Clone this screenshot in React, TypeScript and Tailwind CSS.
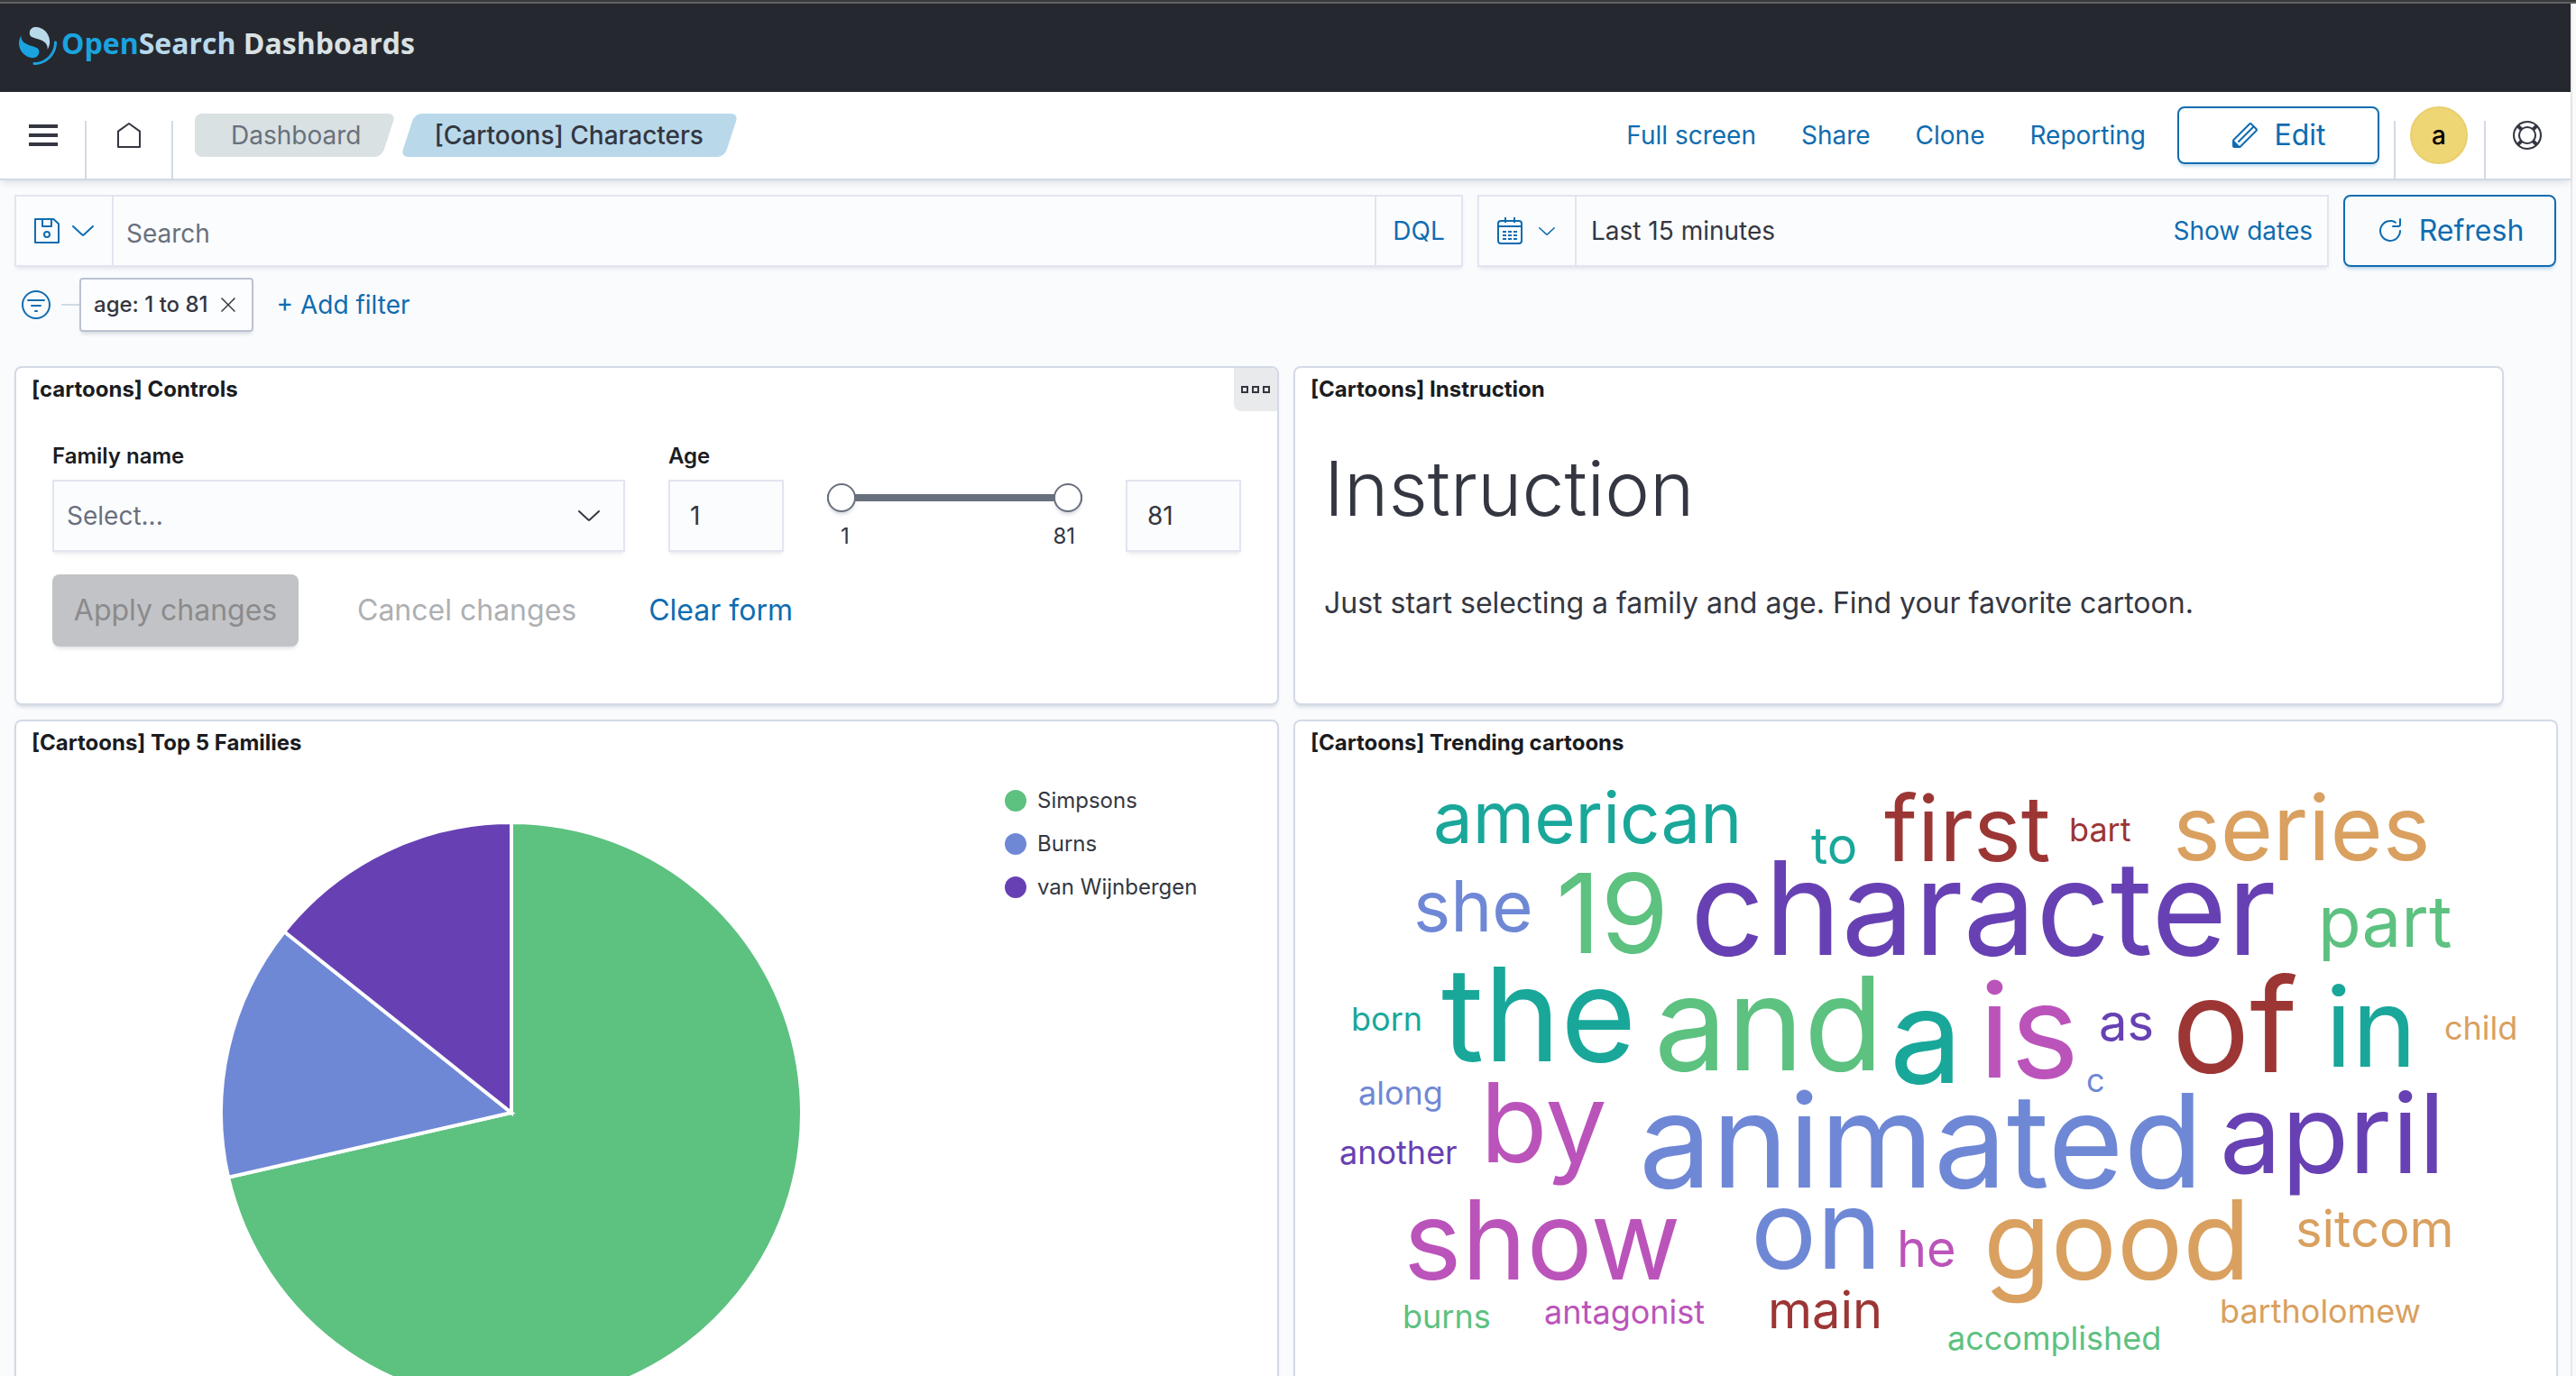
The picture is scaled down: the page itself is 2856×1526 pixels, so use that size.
import React, { useState } from "react";

type IconProps = { className?: string };

const Logo = () => (
  <svg viewBox="0 0 64 64" className="size-[42px]" aria-hidden="true">
    <path
      fill="#1aa3df"
      d="M61.7374 23.5C60.4878 23.5 59.4748 24.513 59.4748 25.7626C59.4748 44.3813 44.3813 59.4748 25.7626 59.4748C24.513 59.4748 23.5 60.4878 23.5 61.7374C23.5 62.987 24.513 64 25.7626 64C46.8805 64 64 46.8805 64 25.7626C64 24.513 62.987 23.5 61.7374 23.5Z"
    />
    <path
      fill="#b9d9eb"
      d="M48.0814 38C50.2572 34.4505 52.3615 29.7178 51.9475 23.0921C51.0899 9.36725 38.6589 -1.04463 26.9206 0.0837327C22.3253 0.525465 17.6068 4.2712 18.026 10.9805C18.2082 13.8961 19.6352 15.6169 21.9544 16.9399C24.1618 18.1992 26.9978 18.9969 30.2128 19.9011C34.0962 20.9934 38.6009 22.2203 42.063 24.7717C46.2125 27.8295 49.0491 31.3743 48.0814 38Z"
    />
    <path
      fill="#1aa3df"
      d="M3.91861 14C1.74276 17.5495 -0.361506 22.2822 0.0524931 28.9079C0.910072 42.6327 13.3411 53.0446 25.0794 51.9163C29.6747 51.4745 34.3932 47.7288 33.974 41.0195C33.7918 38.1039 32.3647 36.3831 30.0456 35.0601C27.8382 33.8008 25.0022 33.0031 21.7872 32.0989C17.9038 31.0066 13.3991 29.7797 9.93694 27.2283C5.78746 24.1705 2.95092 20.6257 3.91861 14Z"
    />
  </svg>
);

const Glyph = ({ className = "", children }: IconProps & { children: React.ReactNode }) => (
  <svg viewBox="0 0 16 16" className={`size-8 shrink-0 ${className}`} fill="none" aria-hidden="true">
    {children}
  </svg>
);

const MenuIcon = () => (
  <Glyph>
    <path fill="currentColor" d="M0 2h16v2H0zM0 7h16v2H0zM0 12h16v2H0z" />
  </Glyph>
);

const HomeIcon = () => (
  <Glyph>
    <path stroke="currentColor" strokeLinejoin="round" d="M2 5.8 8 1.5l6 4.3v8.7H2z" />
  </Glyph>
);

const SaveIcon = () => (
  <Glyph>
    <path stroke="currentColor" strokeLinejoin="round" d="M1.5 1.5h10.2l2.8 2.6v10.4h-13z" />
    <path stroke="currentColor" strokeLinejoin="round" d="M5.5 1.5v4h5v-4" />
    <circle cx="8" cy="10" r="1.5" stroke="currentColor" />
  </Glyph>
);

const CalendarIcon = () => (
  <Glyph>
    <rect x="1.5" y="2.5" width="13" height="12.5" rx="1.5" stroke="currentColor" />
    <path stroke="currentColor" d="M1.5 5.5h13M5.5.5v3M10.5.5v3" />
    <path stroke="currentColor" strokeDasharray="2 1" d="M4 8.5h8M4 10.5h8M4 12.5h8" />
  </Glyph>
);

const FilterIcon = () => (
  <Glyph>
    <circle cx="8" cy="8" r="7.5" stroke="currentColor" />
    <path stroke="currentColor" strokeLinecap="round" d="M3.5 5.5h9M5.5 8.5h5M7.5 11.5h1" />
  </Glyph>
);

const PencilIcon = () => (
  <Glyph>
    <path
      fill="currentColor"
      d="M12.148 3.148L11 2l-9 9v3h3l9-9-1.144-1.144-8.002 7.998a.502.502 0 01-.708 0 .502.502 0 010-.708l8.002-7.998zM11 1c.256 0 .512.098.707.293l3 3a.999.999 0 010 1.414l-9 9A.997.997 0 015 15H2a1 1 0 01-1-1v-3c0-.265.105-.52.293-.707l9-9A.997.997 0 0111 1zM5 14H2v-3l3 3z"
    />
  </Glyph>
);

const HelpIcon = () => (
  <Glyph>
    <path
      fill="currentColor"
      d="M13.6 12.186l-1.357-1.358c-.025-.025-.058-.034-.084-.056.53-.794.84-1.746.84-2.773a4.977 4.977 0 00-.84-2.772c.026-.02.059-.03.084-.056L13.6 3.813a6.96 6.96 0 010 8.373zM8 15a6.956 6.956 0 01-4.186-1.4l1.358-1.358c.025-.025.035-.057.055-.084C6.02 12.688 6.974 13 8 13a4.978 4.978 0 002.773-.84c.02.026.03.058.056.083l1.357 1.358A6.956 6.956 0 018 15zm-5.601-2.813a6.963 6.963 0 010-8.373l1.359 1.358c.024.025.057.035.084.055A4.97 4.97 0 003 8c0 1.027.31 1.98.842 2.773-.027.022-.06.031-.084.056l-1.36 1.358zm5.6-.187A4 4 0 118 4a4 4 0 010 8zM8 1c1.573 0 3.019.525 4.187 1.4l-1.357 1.358c-.025.025-.035.057-.056.084A4.979 4.979 0 008 3a4.979 4.979 0 00-2.773.842c-.021-.027-.03-.059-.055-.084L3.814 2.4A6.957 6.957 0 018 1zm0-1a8.001 8.001 0 10.003 16.002A8.001 8.001 0 008 0z"
    />
  </Glyph>
);

const RefreshIcon = () => (
  <Glyph>
    <path
      fill="currentColor"
      d="M11.228 2.942a.5.5 0 11-.538.842A5 5 0 1013 8a.5.5 0 111 0 6 6 0 11-2.772-5.058zM14 1.5v3A1.5 1.5 0 0112.5 6h-3a.5.5 0 010-1h3a.5.5 0 00.5-.5v-3a.5.5 0 111 0z"
    />
  </Glyph>
);

const Chevron = ({ className = "" }: IconProps) => (
  <svg viewBox="0 0 24 12" className={`shrink-0 ${className}`} fill="none" aria-hidden="true">
    <path stroke="currentColor" strokeWidth="2" strokeLinecap="round" d="m1 1 10.2 9.4q.8.6 1.6 0L23 1" />
  </svg>
);

const MoreIcon = () => (
  <Glyph>
    <path stroke="currentColor" d="M.5 6.5h3v3h-3zM6.5 6.5h3v3h-3zM12.5 6.5h3v3h-3z" />
  </Glyph>
);

const NavDivider = () => <div className="h-16 w-0.5 self-end bg-[#d3dae6]" />;

const fieldClass =
  "h-20 border-2 border-[#e2e5ef] bg-[#fbfcfe] shadow-[0_4px_4px_-2px_rgba(152,162,179,0.25)]";

const thumbClass =
  "pointer-events-none absolute inset-x-0 top-0 h-8 w-full appearance-none bg-transparent outline-none [&::-webkit-slider-thumb]:pointer-events-auto [&::-webkit-slider-thumb]:size-8 [&::-webkit-slider-thumb]:appearance-none [&::-webkit-slider-thumb]:rounded-full [&::-webkit-slider-thumb]:border-2 [&::-webkit-slider-thumb]:border-[#69707d] [&::-webkit-slider-thumb]:bg-white [&::-webkit-slider-thumb]:shadow-[0_4px_4px_-2px_rgba(152,162,179,0.5)]";

const numberClass =
  "w-32 shrink-0 pl-[22px] text-[28px] text-[#343741] outline-none [appearance:textfield] [&::-webkit-inner-spin-button]:appearance-none " +
  fieldClass;

function Panel({
  title,
  className = "",
  actions = false,
  children,
}: {
  title: string;
  className?: string;
  actions?: boolean;
  children: React.ReactNode;
}) {
  return (
    <section
      className={`flex flex-col overflow-hidden rounded-lg border-2 border-[#d3dae6] bg-white shadow-[0_4px_4px_-2px_rgba(152,162,179,0.4)] ${className}`}
    >
      <header className="flex h-12 shrink-0 items-center justify-between pl-[17px]">
        <h2 className="text-2xl font-bold text-[#1a1c21]">{title}</h2>
        {actions && (
          <button
            type="button"
            aria-label="Panel options"
            className="flex size-12 items-center justify-center rounded-bl-lg bg-[#e9eaec] text-[#343741]"
          >
            <MoreIcon />
          </button>
        )}
      </header>
      {children}
    </section>
  );
}

const families = [
  { name: "Simpsons", value: 5, color: "#5dc180", dot: "bg-[#5dc180]" },
  { name: "Burns", value: 1, color: "#6f88d6", dot: "bg-[#6f88d6]" },
  { name: "van Wijnbergen", value: 1, color: "#6741b3", dot: "bg-[#6741b3]" },
];

function Pie() {
  const total = families.reduce((sum, f) => sum + f.value, 0);
  const c = 322;
  const point = (share: number) => {
    const a = share * 2 * Math.PI;
    return `${c + c * Math.sin(a)} ${c - c * Math.cos(a)}`;
  };
  let start = 0;
  return (
    <svg viewBox="0 0 644 644" className="size-[644px] shrink-0" role="img" aria-label="Top 5 families">
      {families.map((f) => {
        const from = start / total;
        start += f.value;
        const to = start / total;
        return (
          <path
            key={f.name}
            d={`M${c} ${c}L${point(from)}A${c} ${c} 0 ${to - from > 0.5 ? 1 : 0} 1 ${point(to)}Z`}
            fill={f.color}
            stroke="#fff"
            strokeWidth="4"
          />
        );
      })}
    </svg>
  );
}

const teal = "#19a79a";
const green = "#5dc180";
const blue = "#6f88d6";
const purple = "#6741b3";
const pink = "#bb54ba";
const red = "#9c3635";
const orange = "#d9a05f";

const words: [string, number, number, number, string][] = [
  ["american", 153, 87, 78, teal],
  ["to", 572, 110, 56, teal],
  ["first", 653, 107, 100, red],
  ["bart", 858, 85, 36, red],
  ["series", 973, 106, 100, orange],
  ["she", 131, 185, 78, blue],
  ["19", 289, 209, 122, green],
  ["character", 438, 211, 144, purple],
  ["part", 1134, 202, 78, green],
  ["born", 62, 295, 36, teal],
  ["the", 162, 329, 144, teal],
  ["and", 398, 339, 144, green],
  ["a", 659, 353, 144, teal],
  ["is", 758, 347, 144, pink],
  ["as", 891, 306, 56, purple],
  ["of", 972, 341, 144, red],
  ["in", 1142, 335, 122, teal],
  ["child", 1274, 305, 36, orange],
  ["c", 877, 363, 36, blue],
  ["along", 70, 377, 36, blue],
  ["by", 205, 441, 122, pink],
  ["animated", 381, 469, 144, blue],
  ["april", 1025, 453, 122, purple],
  ["another", 49, 443, 36, purple],
  ["show", 120, 571, 122, pink],
  ["on", 505, 559, 122, blue],
  ["he", 667, 557, 56, pink],
  ["good", 763, 571, 122, orange],
  ["sitcom", 1109, 535, 56, orange],
  ["main", 524, 625, 56, red],
  ["burns", 119, 625, 36, green],
  ["antagonist", 276, 620, 36, pink],
  ["accomplished", 723, 649, 36, green],
  ["bartholomew", 1025, 619, 36, orange],
];

export default function App() {
  const [range, setRange] = useState<[number, number]>([1, 81]);
  const setMin = (v: string) => setRange([Math.min(Number(v), range[1]), range[1]]);
  const setMax = (v: string) => setRange([range[0], Math.max(Number(v), range[0])]);

  return (
    <div className="flex h-screen flex-col overflow-hidden bg-[#fafbfd] font-[Inter,sans-serif] text-[#343741]">
      <div className="h-1 shrink-0 border-b-2 border-[#606164] bg-[#393a3b]" />
      <div className="flex min-h-0 flex-1 overflow-hidden border-r-4 border-[#fafafa]">
        <div className="min-w-0 flex-1 border-r-2 border-[#e8e8e8]">
          <header className="flex h-[98px] items-start bg-[#25282f] pt-[26px] pl-[21px]">
            <a href="#home" className="flex items-start gap-[5px]">
              <Logo />
              <span className="font-['Open_Sans',sans-serif] text-[32px] leading-9 font-bold text-[#dae1e3]">
                <span className="text-[#1aa3df]">Open</span>
                <span className="text-[#b9d9eb]">Search</span> Dashboards
              </span>
            </a>
          </header>

          <nav className="relative flex h-[98px] items-center border-b-2 border-[#d3dae6] bg-white pr-8 text-[28px] shadow-[0_4px_8px_-2px_rgba(152,162,179,0.35)]">
            <button type="button" aria-label="Menu" className="flex w-[94px] justify-end pr-[30px]">
              <MenuIcon />
            </button>
            <NavDivider />
            <a href="#home" aria-label="Home" className="flex w-[94px] justify-center">
              <HomeIcon />
            </a>
            <NavDivider />
            <ol className="ml-6 flex gap-[5px] leading-[48px]">
              <li className="relative isolate pr-[39px] pl-10 text-[#69707d]">
                <span className="absolute inset-y-0 right-2 left-10 -z-10 -skew-x-[18deg] rounded-lg bg-[#d9e1e2]" />
                <span className="absolute inset-y-0 right-10 left-0 -z-10 rounded-lg bg-[#d9e1e2]" />
                <a href="#dashboards">Dashboard</a>
              </li>
              <li className="relative isolate pr-[39px] pl-[37px] font-medium">
                <span className="absolute inset-y-0 right-2 left-2 -z-10 -skew-x-[18deg] rounded-lg bg-[#b9d9eb]" />
                <span aria-current="page">[Cartoons] Characters</span>
              </li>
            </ol>
            <div className="ml-auto flex items-center gap-[50px] text-[#0f6cb0]">
              <button type="button">Full screen</button>
              <button type="button">Share</button>
              <button type="button">Clone</button>
              <button type="button">Reporting</button>
            </div>
            <button
              type="button"
              className="mr-4 ml-[35px] flex h-16 w-56 items-center justify-center gap-4 rounded-lg border-2 border-[#0f6cb0] text-[32px] text-[#0f6cb0] shadow-[0_4px_4px_-2px_rgba(15,108,176,0.3)]"
            >
              <PencilIcon />
              Edit
            </button>
            <NavDivider />
            <button
              type="button"
              aria-label="Account"
              className="mr-[18px] ml-4 size-16 rounded-full border-2 border-[#e9cf70] bg-[#eed675] font-medium text-black"
            >
              a
            </button>
            <NavDivider />
            <button type="button" aria-label="Help" className="ml-[30px]">
              <HelpIcon />
            </button>
          </nav>

          <main className="p-4 pr-[14px]">
            <div className="mr-0.5 flex gap-4 text-[28px]">
              <div className={`flex min-w-0 flex-1 ${fieldClass}`}>
                <button
                  type="button"
                  aria-label="Saved queries"
                  className="flex w-[106px] items-center gap-3 pl-[18px] text-[#0f6cb0]"
                >
                  <SaveIcon />
                  <Chevron className="w-6" />
                </button>
                <input
                  type="text"
                  aria-label="Search"
                  placeholder="Search"
                  className="min-w-0 flex-1 border-x-2 border-[#e2e5ef] bg-transparent pt-1.5 pl-[14px] outline-none placeholder:text-[#69707d] placeholder:opacity-100"
                />
                <button type="button" className="w-[94px] text-[#0f6cb0]">
                  DQL
                </button>
              </div>
              <div className={`flex w-[944px] items-center ${fieldClass}`}>
                <button
                  type="button"
                  aria-label="Quick select"
                  className="flex h-full w-[108px] items-center gap-4 border-r-2 border-[#e2e5ef] pl-[18px] text-[#0f6cb0]"
                >
                  <CalendarIcon />
                  <Chevron className="w-[18px]" />
                </button>
                <span className="pl-4">Last 15 minutes</span>
                <button type="button" className="ml-auto pr-4 text-[#0f6cb0]">
                  Show dates
                </button>
              </div>
              <button
                type="button"
                className="flex h-20 w-[236px] items-center justify-center gap-4 rounded-lg border-2 border-[#0f6cb0] text-[32px] text-[#0f6cb0] shadow-[0_4px_4px_-2px_rgba(15,108,176,0.3)]"
              >
                <RefreshIcon />
                Refresh
              </button>
            </div>

            <div className="mt-3 flex h-15 items-center pl-2">
              <button type="button" aria-label="Filter options" className="text-[#0f6cb0]">
                <FilterIcon />
              </button>
              <div className="ml-3 h-0.5 w-5 bg-[#d3dae6]" />
              <div className="flex h-15 items-center gap-[14px] rounded border-2 border-[#bbc2d1] bg-[#fcfdfe] pr-[18px] pl-[14px] text-2xl font-medium shadow-[0_4px_4px_-2px_rgba(152,162,179,0.4)]">
                age: 1 to 81
                <button type="button" aria-label="Remove filter">
                  <svg viewBox="0 0 16 16" className="size-4" aria-hidden="true">
                    <path stroke="currentColor" strokeWidth="1.5" d="m.5.5 15 15m0-15-15 15" />
                  </svg>
                </button>
              </div>
              <button type="button" className="ml-[26px] text-[28px] text-[#0f6cb0]">
                + Add filter
              </button>
            </div>

            <div className="mt-[38px] grid grid-cols-2 gap-4">
              <Panel title="[cartoons] Controls" actions className="h-[376px]">
                <form className="px-10 pt-8" onSubmit={(e) => e.preventDefault()}>
                  <div className="grid grid-cols-2 gap-12">
                    <div>
                      <label htmlFor="family" className="mb-2 block text-2xl leading-9 font-semibold text-[#1a1c21]">
                        Family name
                      </label>
                      <div className="relative">
                        <select
                          id="family"
                          className={`w-full appearance-none pl-[14px] text-[28px] text-[#69707d] outline-none ${fieldClass}`}
                        >
                          <option>Select...</option>
                          {families.map((f) => (
                            <option key={f.name}>{f.name}</option>
                          ))}
                        </select>
                        <Chevron className="pointer-events-none absolute top-[34px] right-7 w-6" />
                      </div>
                    </div>
                    <div>
                      <label htmlFor="age-min" className="mb-2 block text-2xl leading-9 font-semibold text-[#1a1c21]">
                        Age
                      </label>
                      <div className="flex">
                        <input
                          id="age-min"
                          type="number"
                          value={range[0]}
                          onChange={(e) => setMin(e.target.value)}
                          className={numberClass}
                        />
                        <div className="mx-12 flex-1 pt-1">
                          <div className="relative flex h-8 items-center">
                            <div className="h-2 w-full bg-[#69707d]" />
                            <input
                              type="range"
                              aria-label="Minimum age"
                              min={1}
                              max={81}
                              value={range[0]}
                              onChange={(e) => setMin(e.target.value)}
                              className={thumbClass}
                            />
                            <input
                              type="range"
                              aria-label="Maximum age"
                              min={1}
                              max={81}
                              value={range[1]}
                              onChange={(e) => setMax(e.target.value)}
                              className={thumbClass}
                            />
                          </div>
                          <div className="mt-[9px] flex justify-between pr-2 pl-[15px] text-2xl leading-9">
                            <span>1</span>
                            <span>81</span>
                          </div>
                        </div>
                        <input
                          type="number"
                          aria-label="Maximum age value"
                          value={range[1]}
                          onChange={(e) => setMax(e.target.value)}
                          className={numberClass}
                        />
                      </div>
                    </div>
                  </div>
                  <div className="mt-6 flex h-20 text-[32px]">
                    <button
                      type="submit"
                      disabled
                      className="w-[273px] rounded-lg bg-[#c2c3c6] text-[#8a8b8d] shadow-[0_4px_4px_-2px_rgba(152,162,179,0.35)]"
                    >
                      Apply changes
                    </button>
                    <button type="button" disabled className="mr-4 ml-[33px] px-8 text-[#adb0b3]">
                      Cancel changes
                    </button>
                    <button type="button" className="px-8 text-[#0f6cb0]">
                      Clear form
                    </button>
                  </div>
                </form>
              </Panel>

              <Panel title="[Cartoons] Instruction" className="mr-[60px] h-[376px]">
                <div className="px-8 pt-9">
                  <h1 className="text-[84px] leading-[100px] font-light">Instruction</h1>
                  <p className="mt-[53px] text-[32px] leading-[48px]">
                    Just start selecting a family and age. Find your favorite cartoon.
                  </p>
                </div>
              </Panel>

              <Panel title="[Cartoons] Top 5 Families" className="h-[800px]">
                <div className="flex">
                  <div className="flex flex-1 justify-center pt-16 pl-0.5">
                    <Pie />
                  </div>
                  <ul className="w-[302px] pt-4 text-2xl leading-[48px]">
                    {families.map((f) => (
                      <li key={f.name} className="flex items-center gap-3">
                        <span className={`size-6 rounded-full ${f.dot}`} />
                        {f.name}
                      </li>
                    ))}
                  </ul>
                </div>
              </Panel>

              <Panel title="[Cartoons] Trending cartoons" className="h-[800px]">
                <svg viewBox="0 0 1398 700" className="w-full" role="img" aria-label="Trending words">
                  {words.map(([text, x, y, size, color]) => (
                    <text key={text} x={x} y={y} fontSize={size} fill={color}>
                      {text}
                    </text>
                  ))}
                </svg>
              </Panel>
            </div>
          </main>
        </div>
      </div>
    </div>
  );
}
